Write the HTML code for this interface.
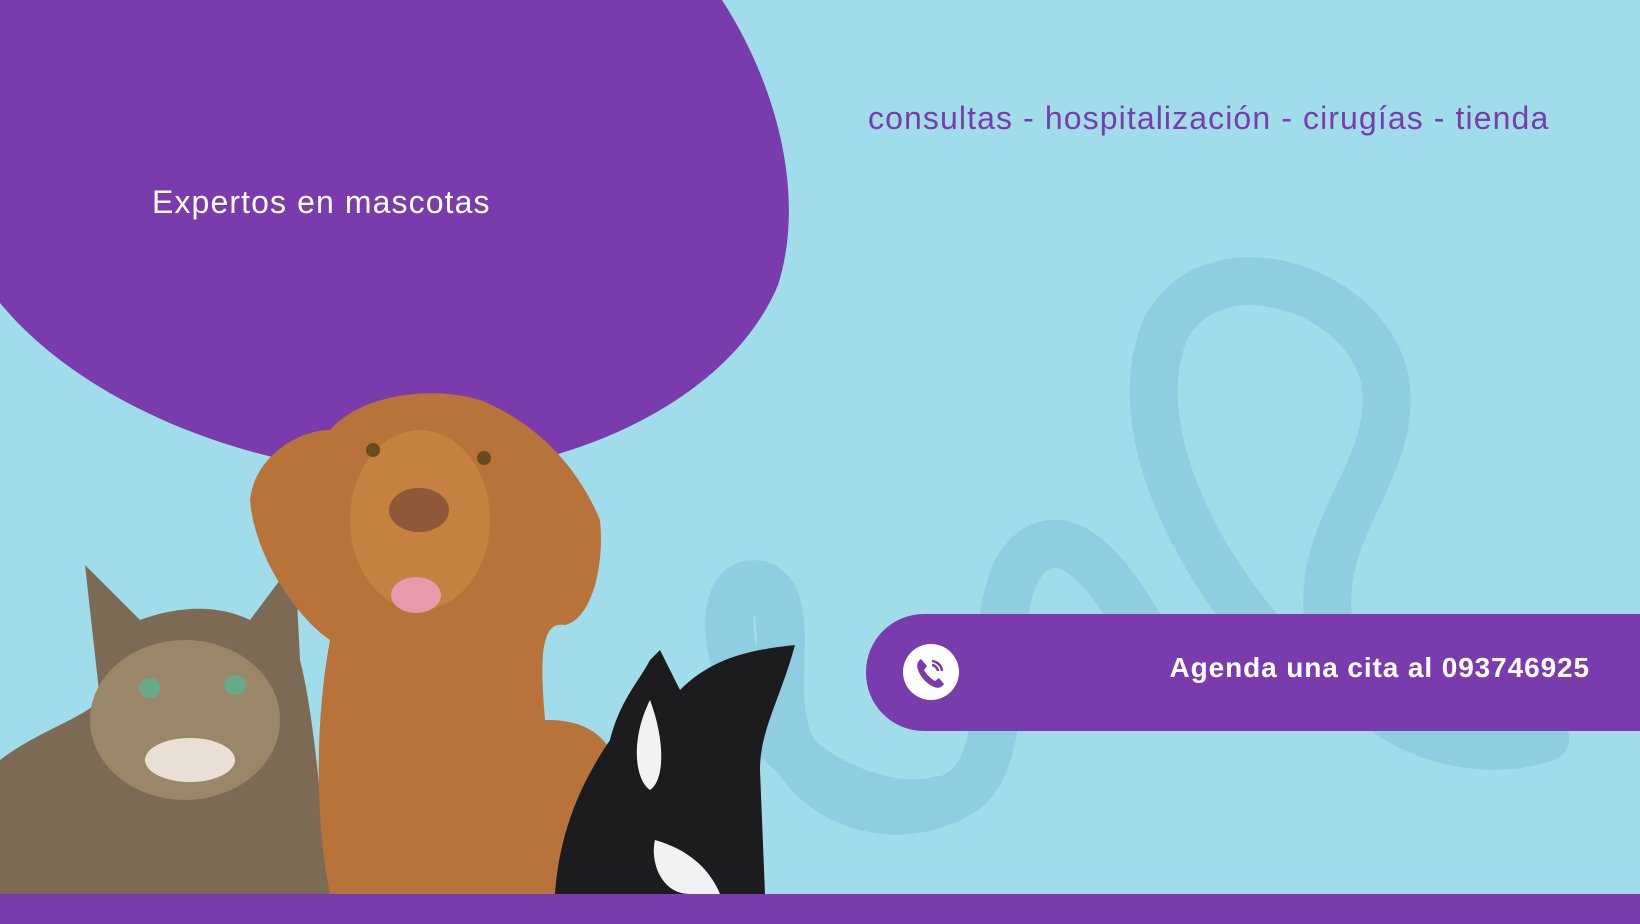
<!DOCTYPE html>
<html><head><meta charset="utf-8"><style>
html,body{margin:0;padding:0}
body{width:1640px;height:924px;position:relative;overflow:hidden;background:#a0dcea;font-family:"Liberation Sans",sans-serif}
.t1{position:absolute;left:152px;top:184px;font-size:32px;color:#fff;letter-spacing:1.1px}
.t2{position:absolute;left:868px;top:100px;font-size:32px;color:#7a3cad;letter-spacing:1.1px}
.bar{position:absolute;left:866px;top:614px;width:800px;height:117px;background:#7a3cad;border-radius:58px 0 0 58px}
.bar .txt{position:absolute;right:76px;top:38px;font-size:28px;font-weight:bold;color:#fff;letter-spacing:0.9px}
.bot{position:absolute;left:0;top:894px;width:1640px;height:30px;background:#7a3cad}
</style></head><body>
<svg width="1640" height="924" style="position:absolute;left:0;top:0">
<path d="M1545,738 C1460,765 1350,720 1330,630 C1310,530 1400,470 1385,380 C1365,285 1210,240 1165,330 C1125,430 1200,560 1255,625 C1290,675 1200,720 1150,645 C1110,570 1060,510 1020,565 C985,620 1015,750 965,790 C905,830 820,810 790,745 C765,690 800,600 760,585 C720,575 720,650 755,710 C795,775 880,815 940,800" fill="none" stroke="#8fcde0" stroke-width="48" stroke-linecap="round"/>
<path d="M0,0 L722,0 C780,90 805,200 778,285 C730,400 570,475 410,476 C240,470 80,400 0,303 Z" fill="#7a3cad"/>
<!-- cat -->
<path d="M0,760 C40,730 80,720 100,700 L85,565 L140,620 C180,605 220,605 250,620 L295,560 L300,660 C315,720 320,800 330,894 L0,894 Z" fill="#7d6a55"/>
<ellipse cx="185" cy="720" rx="95" ry="80" fill="#9a8668"/>
<ellipse cx="150" cy="688" rx="11" ry="10" fill="#6aa88a"/><ellipse cx="235" cy="685" rx="11" ry="10" fill="#6aa88a"/>
<ellipse cx="190" cy="760" rx="45" ry="22" fill="#e8e0d5"/>
<!-- dog -->
<path d="M330,894 C315,820 315,720 330,640 C300,620 255,560 250,500 C255,455 300,430 330,430 C360,395 430,385 480,400 C530,420 575,460 600,520 C605,570 590,620 565,625 C540,620 540,660 545,720 C560,720 600,720 615,760 L615,894 Z" fill="#b8733a"/>
<ellipse cx="420" cy="520" rx="70" ry="90" fill="#c4813f"/>
<ellipse cx="419" cy="510" rx="30" ry="22" fill="#8f5838"/>
<ellipse cx="416" cy="595" rx="25" ry="18" fill="#e99aaa"/>
<circle cx="373" cy="450" r="7" fill="#6b4a1e"/><circle cx="484" cy="458" r="7" fill="#6b4a1e"/>
<!-- rabbit -->
<path d="M555,894 C560,820 590,770 610,740 C620,700 640,680 650,660 L660,650 L680,690 C710,660 745,650 795,645 C780,700 760,730 760,770 L765,894 Z" fill="#1c1c1e"/>
<path d="M650,700 C630,740 635,780 650,790 C665,780 665,740 650,700 Z" fill="#f2f2f2"/>
<path d="M655,840 C650,860 660,894 690,894 L720,894 C710,870 690,850 655,840 Z" fill="#f2f2f2"/>
</svg>
<div class="t1">Expertos en mascotas</div>
<div class="t2">consultas - hospitalización - cirugías - tienda</div>
<div class="bar">
<svg width="56" height="56" style="position:absolute;left:37px;top:30px" viewBox="0 0 56 56">
<circle cx="28" cy="28" r="28" fill="#fff"/>
<path d="M18,15 C15,17 13,20 15,26 C18,34 24,40 31,43 C36,45 39,43 41,40 L36,34 L32,37 C28,35 23,30 21,26 L24,22 Z" fill="#7a3cad"/>
<path d="M29,17 A11,11 0 0 1 39,27 M29,21 A7,7 0 0 1 35,27" fill="none" stroke="#7a3cad" stroke-width="2.5"/>
</svg>
<div class="txt">Agenda una cita al 093746925</div>
</div>
<div class="bot"></div>
</body></html>
